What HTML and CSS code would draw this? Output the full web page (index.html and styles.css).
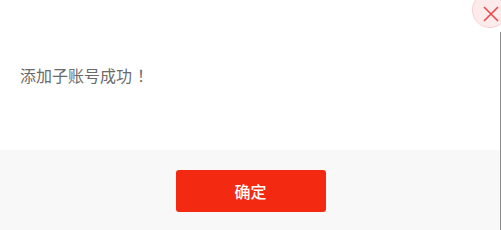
FILE: index.html
```html
<!DOCTYPE html>
<html lang="zh-CN">

<head>
	<meta charset="UTF-8" />
	<meta name="viewport" content="width=device-width, initial-scale=1.0" />
	<title>提示</title>
	<link rel="stylesheet" href="styles.css">
</head>

<body>
	<div class="dialog">
		<div class="dialog-body">
			<p class="dialog-msg">添加子账号成功<span class="punct">！</span></p>
		</div>
		<div class="dialog-footer">
			<button class="confirm-button">确定</button>
		</div>
		<span class="dialog-edge"></span>
		<a class="close-button" href="#">
			<svg width="16" height="16" viewBox="0 0 16 16">
				<path d="M1 1 L15 15 M15 1 L1 15" stroke="#e84a4a" stroke-width="1.6" fill="none" />
			</svg>
		</a>
	</div>
</body>

</html>
```

FILE: styles.css
```css
body {
	margin: 0;
	background-color: #ffffff;
	font-family: "Noto Sans CJK SC", "Noto Sans", sans-serif;
	overflow: hidden;
}

.dialog {
	position: relative;
	width: 501px;
	height: 230px;
	display: flex;
	flex-direction: column;
	overflow: hidden;
}

.dialog-body {
	height: 150px;
	padding: 0 20px;
	display: flex;
	align-items: center;
}

.dialog-msg {
	margin: 0;
	font-size: 16px;
	color: #6a6a6a;
	line-height: 20px;
}

.dialog-msg .punct {
	padding-left: 5px;
}

.dialog-footer {
	flex: 1;
	background-color: #f8f8f8;
	display: flex;
	justify-content: center;
	padding-top: 20px;
}

.confirm-button {
	width: 150px;
	height: 42px;
	border: none;
	border-radius: 3px;
	background-color: #f42912;
	color: #ffffff;
	font-family: "Noto Sans CJK SC", "Noto Sans", sans-serif;
	font-size: 16px;
	font-weight: 500;
	cursor: pointer;
}

.dialog-edge {
	position: absolute;
	right: 0;
	top: 32px;
	bottom: 0;
	width: 1px;
	background-color: #8c8c8c;
}

.close-button {
	position: absolute;
	left: 472px;
	top: -8px;
	width: 36px;
	height: 36px;
	border-radius: 50%;
	background-color: #fdeaea;
	border: 1px solid #f8cfcf;
	box-sizing: border-box;
	display: flex;
	align-items: center;
	justify-content: center;
}

.close-button svg {
	margin-top: 8px;
	margin-left: 2px;
}
```
